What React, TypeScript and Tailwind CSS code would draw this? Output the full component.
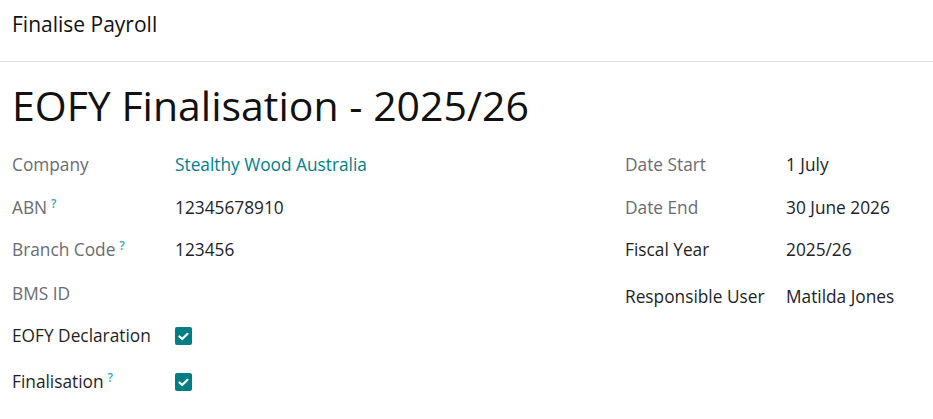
import React from "react";

const font = { fontFamily: '"Open Sans", "Noto Sans", sans-serif' };

function Help() {
  return <sup className="ml-[4px] text-[12px] font-semibold text-[#3aa6c0] relative top-[-4px]">?</sup>;
}

function Check() {
  return (
    <div className="w-[17px] h-[18px] rounded-[2px] bg-[#017e84] flex items-center justify-center">
      <svg width="11" height="9" viewBox="0 0 11 9" fill="none">
        <path d="M1.5 4.5 L4.2 7 L9.5 1.8" stroke="white" strokeWidth="2.2" strokeLinecap="round" strokeLinejoin="round" />
      </svg>
    </div>
  );
}

function Row({ label, value, dark, help, mt, lw }: { label: string; value: React.ReactNode; dark?: boolean; help?: boolean; mt: string; lw: string }) {
  return (
    <div className={`flex items-center h-[42px] ${mt}`}>
      <div className={`${lw} shrink-0 flex items-center ${dark ? "text-[#1f1f1f]" : "text-[#6b6b73]"}`}>
        {label}
        {help && <Help />}
      </div>
      <div className="text-[#22222a]">{value}</div>
    </div>
  );
}

export default function App() {
  return (
    <div className="w-[933px] h-[419px] bg-white overflow-hidden" style={font}>
      <div className="h-[62px] border-b border-[#dedede] px-3 pt-[10px]">
        <div className="text-[21px] leading-[28px] text-[#111]">Finalise Payroll</div>
      </div>
      <div className="px-3">
        <h1 className="mt-[19px] text-[41px] leading-[48px] text-[#111]">EOFY Finalisation - 2025/26</h1>
        <div className="flex mt-[15px] text-[17.3px]">
          <div className="w-[613px] shrink-0 flex flex-col">
            <Row lw="w-[163px]" mt="mt-0" label="Company" value={<span className="text-[#018088]">Stealthy Wood Australia</span>} />
            <Row lw="w-[163px]" mt="mt-[1px]" label="ABN" help value="12345678910" />
            <Row lw="w-[163px]" mt="mt-0" label="Branch Code" help value="123456" />
            <Row lw="w-[163px]" mt="mt-[2px]" label="BMS ID" value="" />
            <Row lw="w-[163px]" mt="mt-0" dark label="EOFY Declaration" value={<Check />} />
            <Row lw="w-[163px]" mt="mt-[4px]" dark label="Finalisation" help value={<Check />} />
          </div>
          <div className="flex-1 flex flex-col">
            <Row lw="w-[161px]" mt="mt-0" label="Date Start" value="1 July" />
            <Row lw="w-[161px]" mt="mt-[1px]" label="Date End" value="30 June 2026" />
            <Row lw="w-[161px]" mt="mt-0" dark label="Fiscal Year" value="2025/26" />
            <Row lw="w-[161px]" mt="mt-[5px]" dark label="Responsible User" value="Matilda Jones" />
          </div>
        </div>
      </div>
    </div>
  );
}
